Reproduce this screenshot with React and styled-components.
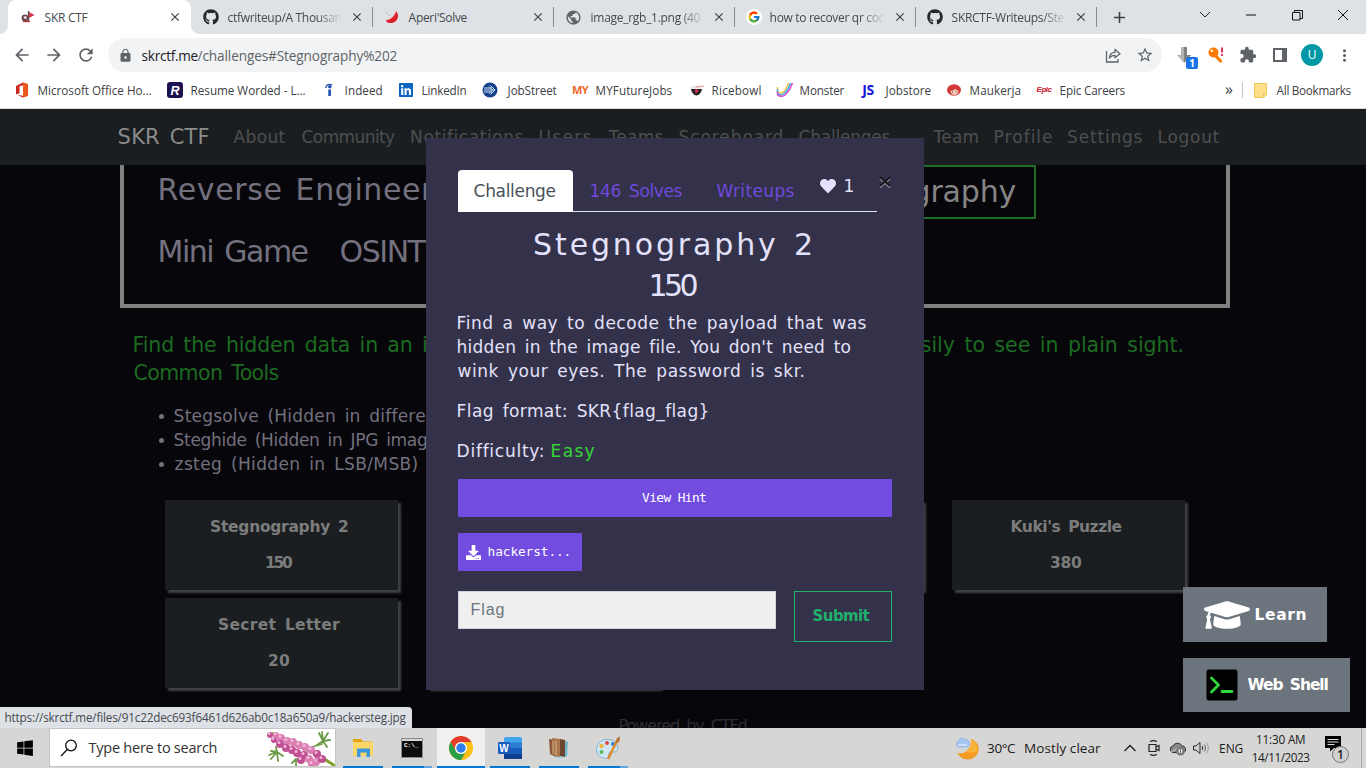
import React, { useLayoutEffect, useRef, useState } from "react";
import styled, { createGlobalStyle, css } from "styled-components";
import { FaGithub, FaHeart, FaDownload, FaGraduationCap, FaLinkedin, FaWindows } from "react-icons/fa";
import { FcGoogle } from "react-icons/fc";
import {
  MdArrowBack, MdArrowForward, MdRefresh, MdLock, MdStarBorder, MdExtension,
  MdMoreVert, MdClose, MdAdd, MdPublic,
} from "react-icons/md";

const ui = `"Open Sans", "Noto Sans", sans-serif`;
const retro = `"DejaVu Sans", sans-serif`;
const retroMono = `"DejaVu Sans Mono", monospace`;

const Global = createGlobalStyle`
  * { box-sizing: border-box; }
  html, body { margin: 0; padding: 0; overflow: hidden; background: #07060b; }
  svg { display: block; flex: none; }
  ul, p, h1, h2 { margin: 0; padding: 0; font-weight: inherit; font-size: inherit; }
  button { font: inherit; margin: 0; cursor: pointer; }
`;

/* ---------- text that is tracked to an exact width ---------- */
const FitBox = styled.span`
  display: inline-block;
  flex: none;
  width: ${(p) => p.$w}px;
  white-space: pre;
`;
const Ink = styled.span`
  display: inline-block;
`;

function Fit({ w, children }) {
  const ref = useRef(null);
  const [style, setStyle] = useState(undefined);
  useLayoutEffect(() => {
    const cs = getComputedStyle(ref.current);
    const ctx = document.createElement("canvas").getContext("2d");
    ctx.font = `${cs.fontWeight} ${cs.fontSize} ${cs.fontFamily}`;
    if (cs.wordSpacing) ctx.wordSpacing = cs.wordSpacing;
    const m = ctx.measureText(children);
    const ink = m.actualBoundingBoxLeft + m.actualBoundingBoxRight;
    const gaps = Math.max(1, children.length - 1);
    setStyle({
      letterSpacing: `${children.length > 1 ? (w - ink) / gaps : 0}px`,
      marginLeft: `${m.actualBoundingBoxLeft + 0.6}px`,
    });
  }, [w, children]);
  return (
    <FitBox $w={w}>
      <Ink ref={ref} style={style}>{children}</Ink>
    </FitBox>
  );
}

/* ---------- frame ---------- */
const Screen = styled.div`
  width: 1366px;
  height: 768px;
  display: grid;
  grid-template-rows: 34px 42px 33px 619px 40px;
  overflow: hidden;
  font-family: ${ui};
`;

/* ---------- tab strip ---------- */
const TabStrip = styled.div`
  display: flex;
  background: #dee1e6;
  padding-left: 8px;
`;
const BrowserTab = styled.div`
  position: relative;
  width: ${(p) => (p.$active ? 183 : 181)}px;
  height: 34px;
  display: flex;
  align-items: center;
  padding: 0 ${(p) => (p.$active ? 9 : 8)}px 0 12px;
  font-size: 12px;
  color: #45494d;
  ${(p) => p.$active && css`
    background: #fff;
    border-radius: 8px 8px 0 0;
    &::before, &::after {
      content: "";
      position: absolute;
      bottom: 0;
      width: 8px;
      height: 8px;
    }
    &::before { left: -8px; background: radial-gradient(circle at 0 0, transparent 7.5px, #fff 8px); }
    &::after { right: -8px; background: radial-gradient(circle at 100% 0, transparent 7.5px, #fff 8px); }
  `}
  ${(p) => p.$line && css`
    &::after {
      content: "";
      position: absolute;
      right: -1px;
      top: 7px;
      width: 1px;
      height: 20px;
      background: #86898d;
    }
  `}
`;
const TabTitle = styled.div`
  margin-left: 8px;
  width: 115px;
  overflow: hidden;
  ${(p) => p.$fade && css`mask-image: linear-gradient(90deg, #000 78%, transparent 100%);`}
`;
const TabClose = styled.div`
  margin-left: auto;
  color: #3c4043;
`;
const NewTab = styled.div`
  width: 46px;
  display: grid;
  place-items: center;
  color: #3c4043;
`;
const WindowControls = styled.div`
  margin-left: auto;
  display: flex;
  height: 30px;
  align-items: center;
`;
const Control = styled.div`
  width: 46px;
  display: grid;
  place-items: center;
`;

/* ---------- toolbar ---------- */
const Toolbar = styled.div`
  display: flex;
  align-items: center;
  background: #fff;
  color: #5f6368;
  padding-left: 12px;
`;
const ToolButton = styled.div`
  width: ${(p) => p.$w || 32}px;
  display: grid;
  place-items: center;
`;
const Omnibox = styled.div`
  width: 1054px;
  height: 34px;
  border-radius: 17px;
  background: #f1f3f4;
  display: flex;
  align-items: center;
  padding: 0 3px 0 10px;
  font-size: 13.6px;
  color: #5f6368;
`;
const Url = styled.div`
  display: flex;
  margin-left: 8px;
  flex: 1;
`;
const Host = styled.span`color: #202124;`;
const ExtButton = styled(ToolButton)`
  position: relative;
`;
const ExtBadge = styled.span`
  position: absolute;
  left: 18px;
  top: 11px;
  width: 12px;
  height: 12px;
  border-radius: 2px;
  background: #1a73e8;
  color: #fff;
  font: bold 10px/12px ${ui};
  text-align: center;
`;
const Avatar = styled.div`
  width: 22px;
  height: 22px;
  border-radius: 50%;
  background: #0097a7;
  color: #fff;
  font: 12px/22px ${ui};
  text-align: center;
`;

/* ---------- bookmarks ---------- */
const BookmarkBar = styled.div`
  display: flex;
  align-items: center;
  background: #fff;
  border-bottom: 1px solid #dadce0;
  padding: 0 15px 4px 14px;
  gap: 16px;
  font-size: 11.7px;
  color: #3c4043;
`;
const Bookmark = styled.div`
  display: flex;
  align-items: center;
  gap: 8px;
`;
const IconSlot = styled.div`
  width: 16px;
  height: 16px;
  display: grid;
  place-items: center;
  flex: none;
`;
const WordMark = styled.span`
  font: ${(p) => p.$font};
  line-height: 16px;
  height: 16px;
  color: ${(p) => p.$color};
  letter-spacing: -0.5px;
`;
const BarEnd = styled.div`
  margin-left: auto;
  display: flex;
  align-items: center;
`;
const Overflow = styled.span`
  font-size: 16px;
  line-height: 16px;
  margin-right: 9px;
  padding-bottom: 2px;
`;
const BarRule = styled.span`
  width: 1px;
  height: 16px;
  background: #c4c7c9;
  margin-right: 9px;
`;

/* ---------- site ---------- */
const Page = styled.div`
  position: relative;
  background: #07060b;
  overflow: hidden;
  font-family: ${retro};
  word-spacing: 3px;
`;
const SiteNav = styled.nav`
  height: 56px;
  background: #1a1e20;
  display: flex;
  align-items: center;
  padding-left: 118px;
  color: #4d4f50;
  font-size: 17px;
`;
const Brand = styled.div`
  font-size: 21px;
  color: #8a8a8b;
  margin-right: 25px;
`;
const NavLinks = styled.div`
  display: flex;
  gap: 16px;
  margin-right: 42px;
  padding-bottom: 1px;
`;
const CategoryBox = styled.section`
  margin: 0 136px 0 120px;
  height: 143px;
  border: 4px solid #808080;
  border-top: 0;
  padding-left: 35px;
  font-size: 30px;
  color: #74717f;
`;
const CategoryRow = styled.div`
  display: flex;
  align-items: flex-start;
  gap: ${(p) => p.$gap || 0}px;
  height: ${(p) => p.$h}px;
  line-height: ${(p) => p.$lh}px;
`;
const ActiveCategory = styled.div`
  margin-left: auto;
  margin-right: 190px;
  height: 54px;
  line-height: 50px;
  padding: 0 19px;
  border: 2px solid #1d6d22;
  color: #858585;
`;
const Intro = styled.div`
  margin: 23px 184px 0 134px;
  font-size: 20.5px;
  line-height: 28px;
  color: #1c6b21;
`;
const IntroLine = styled.div`
  display: flex;
  justify-content: space-between;
`;
const Tools = styled.ul`
  margin: 17px 0 0 159px;
  list-style: none;
  font-size: 17px;
  line-height: 24px;
  color: #74717f;
`;
const Tool = styled.li`
  display: flex;
  align-items: center;
  height: 24px;
  &::before {
    content: "";
    width: 5px;
    height: 5px;
    margin: 1px 10px 0 0;
    border-radius: 50%;
    background: #74717f;
  }
`;
const CardGrid = styled.div`
  margin: 24px 181px 0 165px;
  display: grid;
  grid-template-columns: repeat(4, 233px);
  justify-content: space-between;
  row-gap: 8px;
`;
const Card = styled.div`
  height: 90px;
  background: #1a1e20;
  box-shadow: 3px 3px 2px #414141;
  padding: 15px 5px 0 0;
  display: flex;
  flex-direction: column;
  align-items: center;
  gap: 12px;
  font-size: 15.5px;
  font-weight: bold;
  line-height: 24px;
  color: #7c7c7c;
`;
const Footer = styled.footer`
  margin: 26px 0 0 619px;
  font-size: 16px;
  line-height: 24px;
  color: #2f2e33;
`;

/* ---------- dialog ---------- */
const Dialog = styled.div`
  position: absolute;
  left: 426px;
  top: 29px;
  width: 498px;
  height: 552px;
  background: #33324a;
  padding: 32px;
  color: #e3e1fb;
  font-size: 17px;
`;
const DialogHead = styled.div`
  display: flex;
  align-items: flex-start;
`;
const Tabs = styled.div`
  display: flex;
  width: 419px;
  height: 42px;
  line-height: 42px;
  border-bottom: 1px solid #dee2e6;
  flex: none;
`;
const SelectedTab = styled.div`
  width: 115px;
  height: 42px;
  padding-left: 15px;
  background: #fff;
  color: #495057;
  border-radius: 4px 4px 0 0;
  margin-right: 17px;
`;
const Tab = styled.div`
  color: #7049dd;
  margin-right: ${(p) => p.$gap}px;
`;
const Likes = styled.div`
  display: flex;
  align-items: center;
  gap: 8px;
  height: 32px;
  line-height: 32px;
`;
const CloseX = styled.div`
  margin: 6px 0 0 2px;
`;
const DialogTitle = styled.h2`
  margin-top: 12px;
  padding-right: ${(p) => p.$shift}px;
  text-align: center;
  font-size: 30px;
  line-height: 42px;
  & + & { margin-top: -1px; }
`;
const Description = styled.div`
  margin: 4px 0 0 -1px;
  display: flex;
  flex-direction: column;
  gap: 16px;
  line-height: 24px;
`;
const Paragraph = styled.p`
  display: flex;
  flex-direction: ${(p) => (p.$inline ? "row" : "column")};
  gap: ${(p) => (p.$inline ? 9 : 0)}px;
`;
const Easy = styled.span`color: #34d634;`;
const HintButton = styled.button`
  display: flex;
  align-items: center;
  justify-content: ${(p) => (p.$file ? "flex-start" : "center")};
  gap: 7px;
  width: ${(p) => (p.$file ? 124 : 434)}px;
  height: 38px;
  margin-top: 16px;
  padding: 0 ${(p) => (p.$file ? 8 : 3)}px 0 ${(p) => (p.$file ? 8 : 0)}px;
  border: 0;
  background: #714cdf;
  color: #fff;
  font: 12.8px/38px ${retroMono};
  word-spacing: 0;
`;
const SubmitRow = styled.div`
  display: flex;
  align-items: flex-start;
  justify-content: space-between;
  margin-top: 20px;
`;
const FlagField = styled.div`
  width: 318px;
  height: 38px;
  padding-left: 12px;
  background: #efefef;
  border: 1px solid #ced4da;
  color: #6c757d;
  font: 16px/36px "Liberation Sans", sans-serif;
`;
const SubmitButton = styled.button`
  width: 98px;
  height: 51px;
  padding: 0 4px 0 0;
  border: 1px solid #20b06c;
  background: transparent;
  color: #20b06c;
  font: bold 15px/49px ${retro};
`;

/* ---------- floating parts ---------- */
const FloatStack = styled.div`
  position: absolute;
  left: 1183px;
  top: 478px;
  display: flex;
  flex-direction: column;
  gap: 16px;
`;
const FloatButton = styled.div`
  width: ${(p) => p.$w}px;
  height: ${(p) => p.$h}px;
  padding-left: ${(p) => p.$pad}px;
  display: flex;
  align-items: center;
  gap: ${(p) => p.$gap}px;
  background: #6c757d;
  color: #fff;
  font-size: 15.5px;
  font-weight: bold;
  line-height: 24px;
`;
const LinkStatus = styled.div`
  position: absolute;
  left: 0;
  bottom: 0;
  width: 412px;
  height: 21px;
  padding-left: 5px;
  border-radius: 0 4px 0 0;
  background: #dee1e6;
  color: #45494d;
  font: 11.7px/21px ${ui};
  word-spacing: 0;
`;

/* ---------- taskbar ---------- */
const Taskbar = styled.div`
  display: flex;
  background: #d6d6d5;
  color: #1b1b1b;
`;
const Start = styled.div`
  width: 49px;
  display: grid;
  place-items: center;
`;
const Search = styled.div`
  width: 287px;
  height: 39px;
  background: #fff;
  border: 1px solid #c5c5c5;
  display: flex;
  align-items: center;
  padding-left: 10px;
  font-size: 14.5px;
  color: #333;
`;
const SearchText = styled.div`
  margin-left: 10px;
  flex: 1;
`;
const Apps = styled.div`
  display: flex;
  gap: 1px;
  padding-left: 3px;
`;
const AppSlot = styled.div`
  width: 48px;
  height: 40px;
  display: grid;
  place-items: center;
  position: relative;
  background: ${(p) => (p.$active ? "#f0f0f0" : "transparent")};
  &::after {
    content: "";
    position: absolute;
    bottom: 0;
    left: ${(p) => (p.$active ? 0 : 4)}px;
    right: ${(p) => (p.$active ? 0 : 4)}px;
    height: 2px;
    background: ${(p) => (p.$multi ? "linear-gradient(90deg, #0078d7 80%, #62a8e0 80%)" : "#0078d7")};
  }
`;
const Tray = styled.div`
  margin-left: auto;
  display: flex;
  align-items: center;
  font-size: 13.5px;
`;
const TrayItem = styled.div`
  display: flex;
  align-items: center;
  margin-left: ${(p) => p.$gap || 0}px;
  font-size: ${(p) => p.$size || 13.5}px;
`;
const Clock = styled.div`
  width: 57px;
  margin-left: 10px;
  display: flex;
  flex-direction: column;
  align-items: center;
  font-size: 11.7px;
  line-height: 18px;
`;
const Notice = styled.div`
  position: relative;
  margin: 0 12px 0 16px;
  width: 24px;
  height: 24px;
`;
const NoticeCount = styled.span`
  position: absolute;
  right: 0;
  bottom: -3px;
  width: 17px;
  height: 17px;
  border-radius: 50%;
  border: 1px solid #777;
  background: #d0d0d0;
  font: 600 12px/15px ${ui};
  text-align: center;
`;
const DesktopEdge = styled.div`
  width: 5px;
  height: 40px;
  border-left: 1px solid #a8a8a8;
`;

/* ---------- drawings ---------- */
const SkrIcon = () => (
  <svg width="16" height="16" viewBox="0 0 16 16">
    <path d="M8.5 2v10" stroke="#555" strokeWidth="1.4" />
    <path d="M9 3l5.5 3L9 9z" fill="#d8344a" />
    <circle cx="5" cy="9" r="3.4" fill="#6d4a50" />
    <circle cx="5.2" cy="8.600" r="1.5" fill="#f0d8da" />
    <path d="M3 12.500h7" stroke="#b33" strokeWidth="1.300" />
  </svg>
);
const MelonIcon = () => (
  <svg width="16" height="16" viewBox="0 0 16 16">
    <path d="M12 2c4 4 2 12-5.500 12C3 14 2 12.500 2 11c5-.5 8.500-4 10-9z" fill="#d9202c" />
    <path d="M2 11c5-.5 8.500-4 10-9" stroke="#f3a6a0" strokeWidth="1" fill="none" />
    <circle cx="3" cy="4" r=".7" fill="#aab" /><circle cx="5.500" cy="6" r=".7" fill="#aab" />
  </svg>
);
const GoogleIcon = () => (
  <svg width="16" height="16" viewBox="0 0 16 16">
    <circle cx="8" cy="8" r="8" fill="#fff" />
    <FcGoogle x="1.500" y="1.500" size={13} />
  </svg>
);
const OfficeIcon = () => (
  <svg width="16" height="16" viewBox="0 0 16 16">
    <path d="M2 4l7-3.500 5 1.700v11.600L9 15.500 3.500 13l5.500.7V3.300L5.500 4.200v7L2 12.500z" fill="#c8261a" />
    <path d="M9 .5l5 1.700v11.600l-5 1.700z" fill="#eb5a1c" />
  </svg>
);
const ResumeIcon = () => (
  <svg width="16" height="16" viewBox="0 0 16 16">
    <rect width="16" height="16" rx="3" fill="#1d1150" />
    <text x="3.500" y="12.500" fill="#fff" fontFamily="Liberation Sans, sans-serif" fontWeight="bold" fontStyle="italic" fontSize="12.500">R</text>
  </svg>
);
const IndeedIcon = () => (
  <svg width="16" height="16" viewBox="0 0 16 16">
    <circle cx="8.800" cy="4.800" r="1.800" fill="#1c4fae" />
    <path d="M4.500 6C5.500 2.500 8 1.600 11.300 3" stroke="#1c4fae" strokeWidth="1.200" fill="none" />
    <path d="M7.300 7.500h2.600V14H7.300z" fill="#1c4fae" />
  </svg>
);
const JobStreetIcon = () => (
  <svg width="16" height="16" viewBox="0 0 16 16">
    <circle cx="8" cy="8" r="7.500" fill="#14418c" />
    <path d="M2 6h8M2 8h11M2 10h8M8.500 3.500L13 8l-4.500 4.500M7 4.500L10.500 8 7 11.500" stroke="#cfe0f6" strokeWidth="1" fill="none" />
  </svg>
);
const RiceIcon = () => (
  <svg width="16" height="16" viewBox="0 0 16 16">
    <path d="M3 7h11c-.5 3.500-3 6.500-5.500 6.500S3.500 10.500 3 7z" fill="#2b2226" />
    <path d="M1.500 6.500c2-3.500 9-3.500 11 0z" fill="#e4e4e8" />
    <path d="M8 5l8-1" stroke="#e88" strokeWidth="1" />
    <circle cx="8.500" cy="9" r="1.800" fill="#e0304c" />
  </svg>
);
const MonsterIcon = () => (
  <svg width="18" height="16" viewBox="0 0 18 16" fill="none" strokeWidth="1.500">
    <path d="M1.500 5v4c0 2 3 2.500 5 1.500S11.500 5 12.500 1" stroke="#f7c33c" />
    <path d="M1.500 7v3c0 3 4 3.500 6.500 1.500S13 5 14.500 1" stroke="#3ab6ee" />
    <path d="M1.500 9.500v2c0 3 5 4 8 1S15 5.500 16.500 1" stroke="#d246c8" />
  </svg>
);
const MaukerjaIcon = () => (
  <svg width="16" height="16" viewBox="0 0 16 16">
    <ellipse cx="8" cy="8" rx="7" ry="5.800" fill="#d4383a" />
    <path d="M4.500 8.500c2 1 4-.5 5-2 .5 1.500 1.500 2 3 2 0 3-2 4.500-4 4.500s-4-1.500-4-4.500z" fill="#f6cdbd" />
    <path d="M6 10h1M9.500 10h1" stroke="#633" strokeWidth="1" />
  </svg>
);
const ShareIcon = () => (
  <svg width="18" height="18" viewBox="0 0 18 18" fill="none" stroke="#5f6368" strokeWidth="1.300">
    <path d="M2.500 5v11h11.500v-3" />
    <path d="M5.500 12c.3-4 2.500-5.700 5.500-5.700V3.500L16 7.800l-5 4V9.300C8.500 9.300 6.800 10 5.500 12z" strokeLinejoin="round" />
  </svg>
);
const KeyIcon = () => (
  <svg width="18" height="18" viewBox="0 0 18 18">
    <path d="M8 9l5.500 6" stroke="#f57c00" strokeWidth="3.200" strokeLinecap="round" />
    <circle cx="6.500" cy="6.500" r="5" fill="#ff7a00" />
    <circle cx="4.800" cy="4.800" r="1.200" fill="#fff" />
    <path d="M15 1.500v5M15 8v2" stroke="#d81b4a" strokeWidth="1.800" />
  </svg>
);
const FlowerIcon = () => {
  const petals = [
    [270, 8], [276, 8], [274, 13], [281, 11], [280, 17], [287, 14], [286, 21], [293, 15], [292, 23], [299, 18],
    [297, 26], [305, 20], [304, 28], [311, 23], [301, 33], [309, 32], [317, 27], [316, 35], [322, 32], [312, 37],
  ];
  return (
    <svg width="68" height="37" viewBox="267 2 68 37">
      <g stroke="#6a9a45" strokeWidth="1.800" strokeLinecap="round">
        <path d="M277 25l-6-1M277 25l-8 3M277 25l-6 7M277 25l1 9M277 25l6 4M277 25l-1-5M296 32l-4 4M296 32v7M296 32l5 4" />
        <path d="M323 14l-4-8M323 14l-1-9M323 14l5-8M323 14l7-1M323 14l4 6M323 14l-6 4" />
        <path d="M312 20l10-3" />
      </g>
      <path d="M272 6c14 10 38 15 63 33" stroke="#7da028" strokeWidth="3" fill="none" />
      {petals.map(([x, y], i) => (
        <g key={i}>
          <circle cx={x} cy={y} r={i < 3 ? 3 : 4} fill={i % 2 ? "#dd7fb4" : "#c14f93"} />
          <circle cx={x - 1} cy={y - 1.500} r="1.500" fill="#f2b8d8" />
        </g>
      ))}
    </svg>
  );
};
const ExplorerIcon = () => (
  <svg width="22" height="20" viewBox="0 0 22 20">
    <path d="M1 1h8l2 2.500h9V17H1z" fill="#e5a512" />
    <path d="M1 4h20v14H1z" fill="#fdd668" />
    <path d="M5 19v-8.500h13V19h-3.500v-4.500h-6V19z" fill="#3a96dd" />
  </svg>
);
const CmdIcon = () => (
  <svg width="22" height="20" viewBox="0 0 22 20">
    <rect x=".5" y=".5" width="21" height="19" fill="#0c0c0c" stroke="#8a8a8a" />
    <rect x="1" y="1" width="20" height="2" fill="#d5d5d5" />
    <text x="3" y="9" fill="#fff" fontFamily="Liberation Mono, monospace" fontSize="6" fontWeight="bold">C:\_</text>
  </svg>
);
const ChromeIcon = () => (
  <svg width="24" height="24" viewBox="0 0 24 24">
    <circle cx="12" cy="12" r="12" fill="#fbc116" />
    <path d="M1.610 6A12 12 0 0 1 22.390 6H12a6 6 0 0 0-5.200 9z" fill="#e33b2e" />
    <path d="M1.610 6a12 12 0 0 0 10.390 18l5.200-9a6 6 0 0 1-10.400 0z" fill="#2a9f48" />
    <circle cx="12" cy="12" r="6" fill="#fff" />
    <circle cx="12" cy="12" r="4.700" fill="#2f7de9" />
  </svg>
);
const WordIcon = () => (
  <svg width="24" height="22" viewBox="0 0 24 22">
    <rect x="6" y="0" width="18" height="22" rx="1.500" fill="#41a5ee" />
    <path d="M6 5.500h18V11H6z" fill="#2b7cd3" />
    <path d="M6 11h18v5.500H6z" fill="#185abd" />
    <path d="M6 16.500h18V22H6z" fill="#103f91" />
    <rect x="0" y="5" width="12" height="12" rx="1" fill="#185abd" />
    <text x="1.300" y="14.500" fill="#fff" fontFamily="Liberation Sans, sans-serif" fontWeight="bold" fontSize="10">W</text>
  </svg>
);
const BooksIcon = () => (
  <svg width="22" height="23" viewBox="0 0 22 23">
    <path d="M3 18l8 4 10-3-2-4z" fill="#a9d4e4" />
    <path d="M1 2l7 1v17l-6-3z" fill="#8b5a3a" />
    <path d="M4 1l8 1v18l-6-1z" fill="#a9764d" />
    <path d="M12 2l5 1v17l-5-1z" fill="#6d4630" />
    <path d="M17 4l3 1-1 13-2 2z" fill="#74b5cb" />
    <path d="M5 4v13M8 4v14" stroke="#d7b28a" />
  </svg>
);
const PaintIcon = () => (
  <svg width="25" height="24" viewBox="0 0 25 24">
    <path d="M10 3.500C4 4 0 9 .5 14c.5 6 5 8 9 8.500 3 .5 3-2 3-4s1.500-3 4-2.500c4 .5 6-2 5-6S16 3 10 3.500z" fill="#cfe7f5" stroke="#83b4d3" />
    <circle cx="5.500" cy="10" r="2.200" fill="#e9b53b" /><circle cx="11" cy="7" r="2" fill="#db4a3a" />
    <circle cx="5.500" cy="16" r="2" fill="#5fb653" /><circle cx="17" cy="8" r="2" fill="#3a7fd0" />
    <path d="M22 3L12 23" stroke="#dd8c33" strokeWidth="2.600" />
    <path d="M20 6c0-3 2-5 3.500-5.500 1 2 .5 4.500-1.500 6.500z" fill="#b9773d" />
  </svg>
);
const MoonIcon = () => (
  <svg width="24" height="24" viewBox="0 0 24 24">
    <path d="M16 3a11 10.500 0 1 1-13.500 14C10 19 17 12 16 3z" fill="#f59a22" />
    <path d="M16 3c5 3 7.500 8 6 13-5 1-9 0-11 0 5-3 6-8 5-13z" fill="#f9b53a" />
    <path d="M3 11a3 3 0 0 1 .3-5.500A4 4 0 0 1 10.500 4 3.600 3.600 0 0 1 12 11z" fill="#a8c6f2" stroke="#7fa6e2" strokeWidth=".6" />
    <path d="M3 9h9" stroke="#e6f0ff" strokeWidth="1.200" />
  </svg>
);

/* ---------- data ---------- */
const browserTabs = [
  ["ctfwriteup/A Thousan", 114, <FaGithub size={16} color="#24292e" />, true],
  ["Aperi'Solve", 59, <MelonIcon />, false],
  ["image_rgb_1.png (40", 110, <MdPublic size={17} color="#5f6368" />, true],
  ["how to recover qr cod", 115, <GoogleIcon />, true],
  ["SKRCTF-Writeups/Ste", 113, <FaGithub size={16} color="#24292e" />, true],
];
const bookmarks = [
  ["Microsoft Office Ho...", 113, <OfficeIcon />],
  ["Resume Worded - L...", 114, <ResumeIcon />],
  ["Indeed", 37, <IndeedIcon />],
  ["LinkedIn", 44, <FaLinkedin size={16} color="#0a66c2" />],
  ["JobStreet", 50, <JobStreetIcon />],
  ["MYFutureJobs", 76, <WordMark $font='bold 11px "Open Sans", sans-serif' $color="#f0682a">MY</WordMark>],
  ["Ricebowl", 48, <RiceIcon />],
  ["Monster", 44, <MonsterIcon />],
  ["Jobstore", 46, <WordMark $font='bold 14px "Open Sans", sans-serif' $color="#1414e0">JS</WordMark>],
  ["Maukerja", 50, <MaukerjaIcon />],
  ["Epic Careers", 65, <WordMark $font='italic bold 8px "Liberation Sans", sans-serif' $color="#c8202e">Epic</WordMark>],
];
const mainLinks = [
  ["About", 52], ["Community", 93.500], ["Notifications", 112.500], ["Users", 52],
  ["Teams", 56], ["Scoreboard", 103], ["Challenges", 92],
];
const userLinks = [["Team", 46], ["Profile", 57.500], ["Settings", 74.500], ["Logout", 61]];
const tools = [
  ["Stegsolve (Hidden in different", 269],
  ["Steghide (Hidden in JPG images", 272],
  ["zsteg (Hidden in LSB/MSB)", 243],
];

export default function App() {
  return (
    <Screen>
      <Global />
      <TabStrip>
        <BrowserTab $active>
          <SkrIcon />
          <TabTitle><Fit w={43}>SKR CTF</Fit></TabTitle>
          <TabClose><MdClose size={14} /></TabClose>
        </BrowserTab>
        {browserTabs.map(([title, w, icon, fade]) => (
          <BrowserTab key={title} $line>
            {icon}
            <TabTitle $fade={fade}><Fit w={w}>{title}</Fit></TabTitle>
            <TabClose><MdClose size={14} /></TabClose>
          </BrowserTab>
        ))}
        <NewTab><MdAdd size={19} /></NewTab>
        <WindowControls>
          <Control><svg width="12" height="8" fill="none" stroke="#222"><path d="M1 1l5 5 5-5" /></svg></Control>
          <Control><svg width="10" height="2"><path d="M0 1h10" stroke="#111" /></svg></Control>
          <Control>
            <svg width="11" height="11" fill="none" stroke="#111"><path d="M.5 2.500h7.500v7.500H.5zM2.500 2.500v-2h8v8H8" /></svg>
          </Control>
          <Control><svg width="12" height="12" stroke="#111"><path d="M1 1l10 10M11 1L1 11" /></svg></Control>
        </WindowControls>
      </TabStrip>

      <Toolbar>
        <ToolButton $w={20}><MdArrowBack size={20} /></ToolButton>
        <ToolButton $w={44}><MdArrowForward size={20} /></ToolButton>
        <ToolButton $w={20}><MdRefresh size={20} /></ToolButton>
        <ToolButton $w={12} />
        <Omnibox>
          <MdLock size={15} />
          <Url>
            <Host><Fit w={56}>skrctf.me</Fit></Host>
            <Fit w={200}>/challenges#Stegnography%202</Fit>
          </Url>
          <ToolButton $w={35}><ShareIcon /></ToolButton>
          <ToolButton $w={29}><MdStarBorder size={18} /></ToolButton>
        </Omnibox>
        <ToolButton $w={6} />
        <ExtButton>
          <svg width="14" height="18" viewBox="0 0 14 18"><path d="M4 1h6v8h4l-7 8-7-8h4z" fill="#b3b3b3" /><path d="M7 1h3v8h4l-7 8z" fill="#818181" /></svg>
          <ExtBadge>1</ExtBadge>
        </ExtButton>
        <ToolButton><KeyIcon /></ToolButton>
        <ToolButton><MdExtension size={18} /></ToolButton>
        <ToolButton>
          <svg width="14" height="14"><path d="M1 1h12v12H1z" fill="none" stroke="#5f6368" strokeWidth="2" /><path d="M9 0h5v14H9z" fill="#5f6368" /></svg>
        </ToolButton>
        <ToolButton><Avatar>U</Avatar></ToolButton>
        <ToolButton><MdMoreVert size={19} /></ToolButton>
      </Toolbar>

      <BookmarkBar>
        {bookmarks.map(([label, w, icon]) => (
          <Bookmark key={label}><IconSlot>{icon}</IconSlot><Fit w={w}>{label}</Fit></Bookmark>
        ))}
        <BarEnd>
          <Overflow>»</Overflow>
          <BarRule />
          <IconSlot>
            <svg width="13" height="15"><path d="M.5 .5h12v11l-3 3H.5z" fill="#fee08a" stroke="#edc753" /><path d="M9.500 14v-3h3" fill="none" stroke="#edc753" /></svg>
          </IconSlot>
          <ToolButton $w={8} />
          <Fit w={75}>All Bookmarks</Fit>
        </BarEnd>
      </BookmarkBar>

      <Page>
        <SiteNav>
          <Brand><Fit w={90}>SKR CTF</Fit></Brand>
          <NavLinks>{mainLinks.map(([t, w]) => <Fit key={t} w={w}>{t}</Fit>)}</NavLinks>
          <NavLinks>{userLinks.map(([t, w]) => <Fit key={t} w={w}>{t}</Fit>)}</NavLinks>
        </SiteNav>
        <CategoryBox>
          <CategoryRow $h={62} $lh={49}>
            <Fit w={320}>Reverse Engineering</Fit>
            <ActiveCategory><Fit w={208}>Stegnography</Fit></ActiveCategory>
          </CategoryRow>
          <CategoryRow $h={62} $lh={49} $gap={33}>
            <Fit w={148}>Mini Game</Fit>
            <Fit w={86}>OSINT</Fit>
          </CategoryRow>
        </CategoryBox>
        <Intro>
          <IntroLine>
            <Fit w={350}>Find the hidden data in an image</Fit>
            <Fit w={286}>easily to see in plain sight.</Fit>
          </IntroLine>
          <IntroLine><Fit w={144}>Common Tools</Fit></IntroLine>
        </Intro>
        <Tools>{tools.map(([t, w]) => <Tool key={t}><Fit w={w}>{t}</Fit></Tool>)}</Tools>
        <CardGrid>
          <Card><Fit w={137}>Stegnography 2</Fit><Fit w={27}>150</Fit></Card>
          <Card />
          <Card />
          <Card><Fit w={110}>Kuki's Puzzle</Fit><Fit w={31}>380</Fit></Card>
          <Card><Fit w={121}>Secret Letter</Fit><Fit w={21}>20</Fit></Card>
          <Card />
        </CardGrid>
        <Footer><Fit w={127}>Powered by CTFd</Fit></Footer>

        <Dialog>
          <DialogHead>
            <Tabs>
              <SelectedTab><Fit w={82}>Challenge</Fit></SelectedTab>
              <Tab $gap={34}><Fit w={92}>146 Solves</Fit></Tab>
              <Tab $gap={26}><Fit w={78}>Writeups</Fit></Tab>
              <Likes><FaHeart size={16} /><Fit w={6}>1</Fit></Likes>
            </Tabs>
            <CloseX>
              <svg width="12" height="13" fill="none" strokeWidth="2">
                <path d="M1 2.500l10 9M11 2.500l-10 9" stroke="#8b8a99" />
                <path d="M1 1l10 9M11 1L1 10" stroke="#17161f" />
              </svg>
            </CloseX>
          </DialogHead>
          <DialogTitle $shift={6}><Fit w={277}>Stegnography 2</Fit></DialogTitle>
          <DialogTitle $shift={4}><Fit w={46}>150</Fit></DialogTitle>
          <Description>
            <Paragraph>
              <Fit w={409}>Find a way to decode the payload that was</Fit>
              <Fit w={393}>hidden in the image file. You don't need to</Fit>
              <Fit w={346}>wink your eyes. The password is skr.</Fit>
            </Paragraph>
            <Paragraph><Fit w={250}>{"Flag format: SKR{flag_flag}"}</Fit></Paragraph>
            <Paragraph $inline><Fit w={85}>Difficulty:</Fit><Easy><Fit w={43}>Easy</Fit></Easy></Paragraph>
          </Description>
          <HintButton><Fit w={64}>View Hint</Fit></HintButton>
          <HintButton $file><FaDownload size={15} /><Fit w={80}>hackerst...</Fit></HintButton>
          <SubmitRow>
            <FlagField><Fit w={32}>Flag</Fit></FlagField>
            <SubmitButton><Fit w={56}>Submit</Fit></SubmitButton>
          </SubmitRow>
        </Dialog>

        <FloatStack>
          <FloatButton $w={144} $h={55} $pad={21} $gap={5}>
            <FaGraduationCap size={46} />
            <Fit w={50}>Learn</Fit>
          </FloatButton>
          <FloatButton $w={167} $h={54} $pad={23} $gap={9}>
            <svg width="32" height="32" fill="none" stroke="#2fd53a" strokeWidth="2.800" strokeLinecap="round" strokeLinejoin="round">
              <rect x=".5" y=".5" width="31" height="31" rx="2.500" fill="#000" stroke="none" />
              <path d="M5.500 9l7 7-7 7M16 22.500h10" />
            </svg>
            <Fit w={81}>Web Shell</Fit>
          </FloatButton>
        </FloatStack>
        <LinkStatus><Fit w={401}>https://skrctf.me/files/91c22dec693f6461d626ab0c18a650a9/hackersteg.jpg</Fit></LinkStatus>
      </Page>

      <Taskbar>
        <Start><FaWindows size={18} color="#000" /></Start>
        <Search>
          <svg width="18" height="18" fill="none" stroke="#111" strokeWidth="1.300"><circle cx="11" cy="6.500" r="5.300" /><path d="M7.300 10.500L1 17" /></svg>
          <SearchText><Fit w={128}>Type here to search</Fit></SearchText>
          <FlowerIcon />
        </Search>
        <Apps>
          <AppSlot><ExplorerIcon /></AppSlot>
          <AppSlot $multi><CmdIcon /></AppSlot>
          <AppSlot $active><ChromeIcon /></AppSlot>
          <AppSlot><WordIcon /></AppSlot>
          <AppSlot><BooksIcon /></AppSlot>
          <AppSlot $multi><PaintIcon /></AppSlot>
        </Apps>
        <Tray>
          <MoonIcon />
          <TrayItem $gap={8}><Fit w={29}>30°C</Fit></TrayItem>
          <TrayItem $gap={9}><Fit w={76}>Mostly clear</Fit></TrayItem>
          <TrayItem $gap={23}><svg width="12" height="8" fill="none" stroke="#222" strokeWidth="1.400"><path d="M.5 7L6 1.500 11.500 7" /></svg></TrayItem>
          <TrayItem $gap={12}>
            <svg width="12" height="16" fill="none" stroke="#222" strokeWidth="1.200">
              <path d="M2 1.500c2-1 5-1 7 0M2 14.500c2 1 5 1 7 0M1 4.500h7v7H1zM8 7l3-1.500v5L8 9" />
            </svg>
          </TrayItem>
          <TrayItem $gap={9}>
            <svg width="17" height="15">
              <path d="M4 11.500a3.300 3.300 0 0 1 0-6.500A5 5 0 0 1 13 5a3.500 3.500 0 0 1 2 6.500z" fill="#8b8b8b" stroke="#333" />
              <path d="M2 11l9-5" stroke="#ccc" />
              <circle cx="11.500" cy="10" r="4.500" fill="#777" />
              <path d="M10.300 8v4M12.700 8v4" stroke="#fff" />
            </svg>
          </TrayItem>
          <TrayItem $gap={7}>
            <svg width="17" height="14" fill="none" stroke="#222">
              <path d="M.5 5h2.500L7 1.500v11L3 9H.500zM9 5c1 1.200 1 2.800 0 4" />
              <path d="M11 3.500c2 2 2 5 0 7" stroke="#555" /><path d="M13 1.500c3 3 3 8 0 11" stroke="#999" />
            </svg>
          </TrayItem>
          <TrayItem $gap={10} $size={12}><Fit w={22.500}>ENG</Fit></TrayItem>
          <Clock><Fit w={48}>11:30 AM</Fit><Fit w={56.500}>14/11/2023</Fit></Clock>
          <Notice>
            <svg width="17" height="16"><path d="M0 0h16v12H9l-4 3.500V12H0z" fill="#000" /><path d="M2.500 3.500h11M2.500 6h11M2.500 8.500h7" stroke="#ddd" /></svg>
            <NoticeCount>1</NoticeCount>
          </Notice>
          <DesktopEdge />
        </Tray>
      </Taskbar>
    </Screen>
  );
}
